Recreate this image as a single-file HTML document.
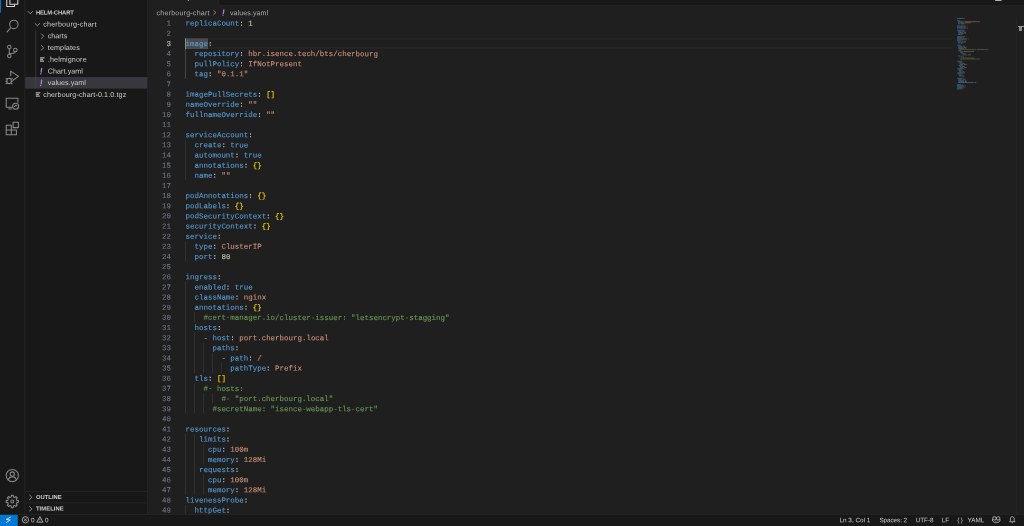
<!DOCTYPE html>
<html><head><meta charset="utf-8"><title>values.yaml - helm-chart</title>
<style>
*{box-sizing:border-box;margin:0;padding:0}
html,body{width:1024px;height:526px;overflow:hidden;background:#1f1f1f}
body{position:relative;font-family:"Liberation Sans",sans-serif;color:#ccc;text-rendering:geometricPrecision}
.bx{position:absolute}
.ic{position:absolute;overflow:visible}
.t,.m{position:absolute;left:0;top:0;transform-origin:0 0;white-space:pre;display:block}
.t{font-size:7.17px;line-height:11.733px;height:11.733px;color:#ccc}
.t.b{font-weight:bold;font-size:5.87px}
.t.s{font-size:6.4px}
.t.x{color:#a57fd0;font-style:italic;font-weight:normal;font-size:8.4px}
.m{font-family:"Liberation Mono",monospace;font-size:7.4667px;line-height:10.146px;height:10.146px;color:#ccc}
.m.n{color:#6e7681}
.m.n.c{color:#ccc}
.k{color:#569cd6}.p{color:#ccc}.s1{color:#ce9178}.nu{color:#b5cea8}.br{color:#ffd700}.co{color:#6a9955}
.m i{font-style:normal}
.fb{position:absolute;left:0;top:0;transform-origin:0 0}
.m{-webkit-text-stroke:0.1px}
#root{position:absolute;left:0;top:0;width:1024px;height:526px;overflow:hidden;will-change:transform}
</style></head><body>
<div id="root">
<div class="bx" style="left:219.00px;top:0.00px;width:805.00px;height:5.60px;background:#181818;"></div>
<svg class="ic" style="left:219px;top:5px" width="805" height="1" viewBox="219 5 805 1"><rect x="219.00" y="5.30" width="805.00" height="0.60" fill="#2b2b2b"/></svg>
<svg class="ic" style="left:218px;top:-1px" width="2" height="7" viewBox="218 -1 2 7"><rect x="218.60" y="-1.00" width="0.60" height="6.60" fill="#2b2b2b"/></svg>
<svg class="ic" style="left:187px;top:-1px" width="2" height="2" viewBox="187 -1 2 2"><rect x="187.80" y="-0.30" width="1.00" height="1.20" fill="#bdbdbd"/></svg>
<svg class="ic" style="left:995px;top:-1px" width="7" height="2" viewBox="995 -1 7 2"><rect x="995.20" y="-0.30" width="6.30" height="1.20" fill="#c8c8c8"/></svg>
<span id="b0" class="t" style="transform:translate(156.50px,8.20px) rotate(.03deg);letter-spacing:0.177px;color:#a9a9a9">cherbourg-chart</span>
<svg class="ic" style="left:210px;top:8px" width="10" height="10" fill="none" stroke="#a9a9a9" stroke-width="1.5" ><g transform="translate(0.800 0.750) scale(0.46875)"><path d="M5.5 3l5.5 5-5.5 5"/></g></svg>
<svg class="ic" style="left:220px;top:8px" width="8" height="10" fill="none" stroke="#a882d6" stroke-width="1" stroke-linecap="round"><g transform="translate(3.400 4.500) scale(1.00000)"><path d="M0.450 -2.700L-0.050 0.900" stroke-width="1.300"/><path d="M-0.400 2.550l-0.020 0.100" stroke-width="1.350"/></g></svg>
<span id="b1" class="t" style="transform:translate(230.00px,8.20px) rotate(.03deg);letter-spacing:0.038px;color:#a9a9a9">values.yaml</span>
<svg class="ic" style="left:185px;top:38px" width="768" height="2" viewBox="185 38 768 2"><rect x="185.20" y="38.44" width="767.00" height="1.07" fill="#2a2a2a"/></svg>
<svg class="ic" style="left:185px;top:47px" width="768" height="2" viewBox="185 47 768 2"><rect x="185.20" y="47.37" width="767.00" height="1.07" fill="#2a2a2a"/></svg>
<svg class="ic" style="left:185px;top:38px" width="23" height="12" viewBox="185 38 23 12"><rect x="185.30" y="38.29" width="22.70" height="10.75" fill="#4a4b4d"/></svg>
<svg class="ic" style="left:185px;top:48px" width="1" height="31" viewBox="185 48 1 31"><rect x="185.10" y="48.44" width="0.55" height="30.44" fill="#666666"/></svg>
<svg class="ic" style="left:185px;top:139px" width="1" height="42" viewBox="185 139 1 42"><rect x="185.10" y="139.75" width="0.55" height="40.58" fill="#3e3e3e"/></svg>
<svg class="ic" style="left:185px;top:241px" width="1" height="21" viewBox="185 241 1 21"><rect x="185.10" y="241.21" width="0.55" height="20.29" fill="#3e3e3e"/></svg>
<svg class="ic" style="left:185px;top:281px" width="1" height="133" viewBox="185 281 1 133"><rect x="185.10" y="281.80" width="0.55" height="131.90" fill="#3e3e3e"/></svg>
<svg class="ic" style="left:185px;top:433px" width="1" height="62" viewBox="185 433 1 62"><rect x="185.10" y="433.99" width="0.55" height="60.88" fill="#3e3e3e"/></svg>
<svg class="ic" style="left:185px;top:505px" width="1" height="21" viewBox="185 505 1 21"><rect x="185.10" y="505.01" width="0.55" height="20.29" fill="#3e3e3e"/></svg>
<svg class="ic" style="left:194px;top:312px" width="1" height="11" viewBox="194 312 1 11"><rect x="194.06" y="312.23" width="0.55" height="10.15" fill="#3e3e3e"/></svg>
<svg class="ic" style="left:194px;top:332px" width="1" height="42" viewBox="194 332 1 42"><rect x="194.06" y="332.53" width="0.55" height="40.58" fill="#3e3e3e"/></svg>
<svg class="ic" style="left:194px;top:383px" width="1" height="31" viewBox="194 383 1 31"><rect x="194.06" y="383.26" width="0.55" height="30.44" fill="#3e3e3e"/></svg>
<svg class="ic" style="left:194px;top:433px" width="1" height="62" viewBox="194 433 1 62"><rect x="194.06" y="433.99" width="0.55" height="60.88" fill="#3e3e3e"/></svg>
<svg class="ic" style="left:194px;top:515px" width="1" height="11" viewBox="194 515 1 11"><rect x="194.06" y="515.15" width="0.55" height="10.15" fill="#3e3e3e"/></svg>
<svg class="ic" style="left:203px;top:342px" width="1" height="32" viewBox="203 342 1 32"><rect x="203.02" y="342.67" width="0.55" height="30.44" fill="#3e3e3e"/></svg>
<svg class="ic" style="left:203px;top:393px" width="1" height="21" viewBox="203 393 1 21"><rect x="203.02" y="393.40" width="0.55" height="20.29" fill="#3e3e3e"/></svg>
<svg class="ic" style="left:203px;top:444px" width="1" height="21" viewBox="203 444 1 21"><rect x="203.02" y="444.13" width="0.55" height="20.29" fill="#3e3e3e"/></svg>
<svg class="ic" style="left:203px;top:474px" width="1" height="21" viewBox="203 474 1 21"><rect x="203.02" y="474.57" width="0.55" height="20.29" fill="#3e3e3e"/></svg>
<svg class="ic" style="left:211px;top:352px" width="2" height="22" viewBox="211 352 2 22"><rect x="211.98" y="352.82" width="0.55" height="20.29" fill="#3e3e3e"/></svg>
<svg class="ic" style="left:211px;top:393px" width="2" height="11" viewBox="211 393 2 11"><rect x="211.98" y="393.40" width="0.55" height="10.15" fill="#3e3e3e"/></svg>
<svg class="ic" style="left:220px;top:362px" width="2" height="12" viewBox="220 362 2 12"><rect x="220.94" y="362.96" width="0.55" height="10.15" fill="#3e3e3e"/></svg>
<span class="m n" style="transform:translate(166.42px,19.60px) rotate(.03deg);">1</span>
<span class="m" style="transform:translate(185.60px,19.60px) rotate(.03deg);"><i class="k">replicaCount</i><i class="p">:</i> <i class="nu">1</i></span>
<span class="m n" style="transform:translate(166.42px,29.75px) rotate(.03deg);">2</span>
<span class="m n c" style="transform:translate(166.42px,39.89px) rotate(.03deg);">3</span>
<span class="m" style="transform:translate(185.60px,39.89px) rotate(.03deg);"><i class="k">image</i><i class="p">:</i></span>
<span class="m n" style="transform:translate(166.42px,50.04px) rotate(.03deg);">4</span>
<span id="c4" class="m" style="transform:translate(185.60px,50.04px) rotate(.03deg);">  <i class="k">repository</i><i class="p">:</i> <i class="s1">hbr.isence.tech/bts/cherbourg</i></span>
<span class="m n" style="transform:translate(166.42px,60.18px) rotate(.03deg);">5</span>
<span class="m" style="transform:translate(185.60px,60.18px) rotate(.03deg);">  <i class="k">pullPolicy</i><i class="p">:</i> <i class="s1">IfNotPresent</i></span>
<span class="m n" style="transform:translate(166.42px,70.33px) rotate(.03deg);">6</span>
<span class="m" style="transform:translate(185.60px,70.33px) rotate(.03deg);">  <i class="k">tag</i><i class="p">:</i> <i class="s1">"0.1.1"</i></span>
<span class="m n" style="transform:translate(166.42px,80.48px) rotate(.03deg);">7</span>
<span class="m n" style="transform:translate(166.42px,90.62px) rotate(.03deg);">8</span>
<span class="m" style="transform:translate(185.60px,90.62px) rotate(.03deg);"><i class="k">imagePullSecrets</i><i class="p">:</i> <i class="br">[]</i></span>
<span class="m n" style="transform:translate(166.42px,100.77px) rotate(.03deg);">9</span>
<span class="m" style="transform:translate(185.60px,100.77px) rotate(.03deg);"><i class="k">nameOverride</i><i class="p">:</i> <i class="s1">""</i></span>
<span class="m n" style="transform:translate(161.94px,110.91px) rotate(.03deg);">10</span>
<span class="m" style="transform:translate(185.60px,110.91px) rotate(.03deg);"><i class="k">fullnameOverride</i><i class="p">:</i> <i class="s1">""</i></span>
<span class="m n" style="transform:translate(161.94px,121.06px) rotate(.03deg);">11</span>
<span class="m n" style="transform:translate(161.94px,131.21px) rotate(.03deg);">12</span>
<span class="m" style="transform:translate(185.60px,131.21px) rotate(.03deg);"><i class="k">serviceAccount</i><i class="p">:</i></span>
<span class="m n" style="transform:translate(161.94px,141.35px) rotate(.03deg);">13</span>
<span class="m" style="transform:translate(185.60px,141.35px) rotate(.03deg);">  <i class="k">create</i><i class="p">:</i> <i class="k">true</i></span>
<span class="m n" style="transform:translate(161.94px,151.50px) rotate(.03deg);">14</span>
<span class="m" style="transform:translate(185.60px,151.50px) rotate(.03deg);">  <i class="k">automount</i><i class="p">:</i> <i class="k">true</i></span>
<span class="m n" style="transform:translate(161.94px,161.64px) rotate(.03deg);">15</span>
<span class="m" style="transform:translate(185.60px,161.64px) rotate(.03deg);">  <i class="k">annotations</i><i class="p">:</i> <i class="br">{}</i></span>
<span class="m n" style="transform:translate(161.94px,171.79px) rotate(.03deg);">16</span>
<span class="m" style="transform:translate(185.60px,171.79px) rotate(.03deg);">  <i class="k">name</i><i class="p">:</i> <i class="s1">""</i></span>
<span class="m n" style="transform:translate(161.94px,181.94px) rotate(.03deg);">17</span>
<span class="m n" style="transform:translate(161.94px,192.08px) rotate(.03deg);">18</span>
<span class="m" style="transform:translate(185.60px,192.08px) rotate(.03deg);"><i class="k">podAnnotations</i><i class="p">:</i> <i class="br">{}</i></span>
<span class="m n" style="transform:translate(161.94px,202.23px) rotate(.03deg);">19</span>
<span class="m" style="transform:translate(185.60px,202.23px) rotate(.03deg);"><i class="k">podLabels</i><i class="p">:</i> <i class="br">{}</i></span>
<span class="m n" style="transform:translate(161.94px,212.37px) rotate(.03deg);">20</span>
<span class="m" style="transform:translate(185.60px,212.37px) rotate(.03deg);"><i class="k">podSecurityContext</i><i class="p">:</i> <i class="br">{}</i></span>
<span class="m n" style="transform:translate(161.94px,222.52px) rotate(.03deg);">21</span>
<span class="m" style="transform:translate(185.60px,222.52px) rotate(.03deg);"><i class="k">securityContext</i><i class="p">:</i> <i class="br">{}</i></span>
<span class="m n" style="transform:translate(161.94px,232.67px) rotate(.03deg);">22</span>
<span class="m" style="transform:translate(185.60px,232.67px) rotate(.03deg);"><i class="k">service</i><i class="p">:</i></span>
<span class="m n" style="transform:translate(161.94px,242.81px) rotate(.03deg);">23</span>
<span class="m" style="transform:translate(185.60px,242.81px) rotate(.03deg);">  <i class="k">type</i><i class="p">:</i> <i class="s1">ClusterIP</i></span>
<span class="m n" style="transform:translate(161.94px,252.96px) rotate(.03deg);">24</span>
<span class="m" style="transform:translate(185.60px,252.96px) rotate(.03deg);">  <i class="k">port</i><i class="p">:</i> <i class="nu">80</i></span>
<span class="m n" style="transform:translate(161.94px,263.10px) rotate(.03deg);">25</span>
<span class="m n" style="transform:translate(161.94px,273.25px) rotate(.03deg);">26</span>
<span class="m" style="transform:translate(185.60px,273.25px) rotate(.03deg);"><i class="k">ingress</i><i class="p">:</i></span>
<span class="m n" style="transform:translate(161.94px,283.40px) rotate(.03deg);">27</span>
<span class="m" style="transform:translate(185.60px,283.40px) rotate(.03deg);">  <i class="k">enabled</i><i class="p">:</i> <i class="k">true</i></span>
<span class="m n" style="transform:translate(161.94px,293.54px) rotate(.03deg);">28</span>
<span class="m" style="transform:translate(185.60px,293.54px) rotate(.03deg);">  <i class="k">className</i><i class="p">:</i> <i class="s1">nginx</i></span>
<span class="m n" style="transform:translate(161.94px,303.69px) rotate(.03deg);">29</span>
<span class="m" style="transform:translate(185.60px,303.69px) rotate(.03deg);">  <i class="k">annotations</i><i class="p">:</i> <i class="br">{}</i></span>
<span class="m n" style="transform:translate(161.94px,313.83px) rotate(.03deg);">30</span>
<span id="c30" class="m" style="transform:translate(185.60px,313.83px) rotate(.03deg);">    <i class="co">#cert-manager.io/cluster-issuer: "letsencrypt-stagging"</i></span>
<span class="m n" style="transform:translate(161.94px,323.98px) rotate(.03deg);">31</span>
<span class="m" style="transform:translate(185.60px,323.98px) rotate(.03deg);">  <i class="k">hosts</i><i class="p">:</i></span>
<span class="m n" style="transform:translate(161.94px,334.13px) rotate(.03deg);">32</span>
<span class="m" style="transform:translate(185.60px,334.13px) rotate(.03deg);">    <i class="p">-</i> <i class="k">host</i><i class="p">:</i> <i class="s1">port.cherbourg.local</i></span>
<span class="m n" style="transform:translate(161.94px,344.27px) rotate(.03deg);">33</span>
<span class="m" style="transform:translate(185.60px,344.27px) rotate(.03deg);">      <i class="k">paths</i><i class="p">:</i></span>
<span class="m n" style="transform:translate(161.94px,354.42px) rotate(.03deg);">34</span>
<span class="m" style="transform:translate(185.60px,354.42px) rotate(.03deg);">        <i class="p">-</i> <i class="k">path</i><i class="p">:</i> <i class="s1">/</i></span>
<span class="m n" style="transform:translate(161.94px,364.56px) rotate(.03deg);">35</span>
<span class="m" style="transform:translate(185.60px,364.56px) rotate(.03deg);">          <i class="k">pathType</i><i class="p">:</i> <i class="s1">Prefix</i></span>
<span class="m n" style="transform:translate(161.94px,374.71px) rotate(.03deg);">36</span>
<span class="m" style="transform:translate(185.60px,374.71px) rotate(.03deg);">  <i class="k">tls</i><i class="p">:</i> <i class="br">[]</i></span>
<span class="m n" style="transform:translate(161.94px,384.86px) rotate(.03deg);">37</span>
<span class="m" style="transform:translate(185.60px,384.86px) rotate(.03deg);">    <i class="co">#- hosts:</i></span>
<span class="m n" style="transform:translate(161.94px,395.00px) rotate(.03deg);">38</span>
<span class="m" style="transform:translate(185.60px,395.00px) rotate(.03deg);">        <i class="co">#- "port.cherbourg.local"</i></span>
<span class="m n" style="transform:translate(161.94px,405.15px) rotate(.03deg);">39</span>
<span class="m" style="transform:translate(185.60px,405.15px) rotate(.03deg);">      <i class="co">#secretName: "isence-webapp-tls-cert"</i></span>
<span class="m n" style="transform:translate(161.94px,415.29px) rotate(.03deg);">40</span>
<span class="m n" style="transform:translate(161.94px,425.44px) rotate(.03deg);">41</span>
<span class="m" style="transform:translate(185.60px,425.44px) rotate(.03deg);"><i class="k">resources</i><i class="p">:</i></span>
<span class="m n" style="transform:translate(161.94px,435.59px) rotate(.03deg);">42</span>
<span class="m" style="transform:translate(185.60px,435.59px) rotate(.03deg);">   <i class="k">limits</i><i class="p">:</i></span>
<span class="m n" style="transform:translate(161.94px,445.73px) rotate(.03deg);">43</span>
<span class="m" style="transform:translate(185.60px,445.73px) rotate(.03deg);">     <i class="k">cpu</i><i class="p">:</i> <i class="s1">100m</i></span>
<span class="m n" style="transform:translate(161.94px,455.88px) rotate(.03deg);">44</span>
<span class="m" style="transform:translate(185.60px,455.88px) rotate(.03deg);">     <i class="k">memory</i><i class="p">:</i> <i class="s1">128Mi</i></span>
<span class="m n" style="transform:translate(161.94px,466.02px) rotate(.03deg);">45</span>
<span class="m" style="transform:translate(185.60px,466.02px) rotate(.03deg);">   <i class="k">requests</i><i class="p">:</i></span>
<span class="m n" style="transform:translate(161.94px,476.17px) rotate(.03deg);">46</span>
<span class="m" style="transform:translate(185.60px,476.17px) rotate(.03deg);">     <i class="k">cpu</i><i class="p">:</i> <i class="s1">100m</i></span>
<span class="m n" style="transform:translate(161.94px,486.32px) rotate(.03deg);">47</span>
<span class="m" style="transform:translate(185.60px,486.32px) rotate(.03deg);">     <i class="k">memory</i><i class="p">:</i> <i class="s1">128Mi</i></span>
<span class="m n" style="transform:translate(161.94px,496.46px) rotate(.03deg);">48</span>
<span class="m" style="transform:translate(185.60px,496.46px) rotate(.03deg);"><i class="k">livenessProbe</i><i class="p">:</i></span>
<span class="m n" style="transform:translate(161.94px,506.61px) rotate(.03deg);">49</span>
<span class="m" style="transform:translate(185.60px,506.61px) rotate(.03deg);">  <i class="k">httpGet</i><i class="p">:</i></span>
<span class="m n" style="transform:translate(161.94px,516.75px) rotate(.03deg);">50</span>
<span class="m" style="transform:translate(185.60px,516.75px) rotate(.03deg);">    <i class="k">path</i><i class="p">:</i> <i class="s1">/</i></span>
<svg class="ic" style="left:185px;top:38px" width="1" height="12" viewBox="185 38 1 12"><rect x="185.00" y="38.29" width="1.00" height="10.75" fill="#8c8c8c"/></svg>
<svg class="ic" style="left:956.8px;top:17.75px" width="60" height="80" viewBox="0 0 60 80"><rect x="0.00" y="0.00" width="6.40" height="1.01" fill="#569cd6" opacity="0.42"/><rect x="6.40" y="0.00" width="0.53" height="1.01" fill="#cccccc" opacity="0.19"/><rect x="7.47" y="0.00" width="0.53" height="1.01" fill="#b5cea8" opacity="0.42"/><rect x="0.00" y="2.13" width="2.67" height="1.01" fill="#569cd6" opacity="0.42"/><rect x="2.67" y="2.13" width="0.53" height="1.01" fill="#cccccc" opacity="0.19"/><rect x="1.07" y="3.20" width="5.33" height="1.01" fill="#569cd6" opacity="0.42"/><rect x="6.40" y="3.20" width="0.53" height="1.01" fill="#cccccc" opacity="0.19"/><rect x="7.47" y="3.20" width="15.47" height="1.01" fill="#ce9178" opacity="0.42"/><rect x="1.07" y="4.27" width="5.33" height="1.01" fill="#569cd6" opacity="0.42"/><rect x="6.40" y="4.27" width="0.53" height="1.01" fill="#cccccc" opacity="0.19"/><rect x="7.47" y="4.27" width="6.40" height="1.01" fill="#ce9178" opacity="0.42"/><rect x="1.07" y="5.33" width="1.60" height="1.01" fill="#569cd6" opacity="0.42"/><rect x="2.67" y="5.33" width="0.53" height="1.01" fill="#cccccc" opacity="0.19"/><rect x="3.73" y="5.33" width="3.73" height="1.01" fill="#ce9178" opacity="0.42"/><rect x="0.00" y="7.47" width="8.53" height="1.01" fill="#569cd6" opacity="0.42"/><rect x="8.53" y="7.47" width="0.53" height="1.01" fill="#cccccc" opacity="0.19"/><rect x="9.60" y="7.47" width="1.07" height="1.01" fill="#ffd700" opacity="0.19"/><rect x="0.00" y="8.53" width="6.40" height="1.01" fill="#569cd6" opacity="0.42"/><rect x="6.40" y="8.53" width="0.53" height="1.01" fill="#cccccc" opacity="0.19"/><rect x="7.47" y="8.53" width="1.07" height="1.01" fill="#ce9178" opacity="0.42"/><rect x="0.00" y="9.60" width="8.53" height="1.01" fill="#569cd6" opacity="0.42"/><rect x="8.53" y="9.60" width="0.53" height="1.01" fill="#cccccc" opacity="0.19"/><rect x="9.60" y="9.60" width="1.07" height="1.01" fill="#ce9178" opacity="0.42"/><rect x="0.00" y="11.73" width="7.47" height="1.01" fill="#569cd6" opacity="0.42"/><rect x="7.47" y="11.73" width="0.53" height="1.01" fill="#cccccc" opacity="0.19"/><rect x="1.07" y="12.80" width="3.20" height="1.01" fill="#569cd6" opacity="0.42"/><rect x="4.27" y="12.80" width="0.53" height="1.01" fill="#cccccc" opacity="0.19"/><rect x="5.33" y="12.80" width="2.13" height="1.01" fill="#569cd6" opacity="0.42"/><rect x="1.07" y="13.87" width="4.80" height="1.01" fill="#569cd6" opacity="0.42"/><rect x="5.87" y="13.87" width="0.53" height="1.01" fill="#cccccc" opacity="0.19"/><rect x="6.93" y="13.87" width="2.13" height="1.01" fill="#569cd6" opacity="0.42"/><rect x="1.07" y="14.93" width="5.87" height="1.01" fill="#569cd6" opacity="0.42"/><rect x="6.93" y="14.93" width="0.53" height="1.01" fill="#cccccc" opacity="0.19"/><rect x="8.00" y="14.93" width="1.07" height="1.01" fill="#ffd700" opacity="0.19"/><rect x="1.07" y="16.00" width="2.13" height="1.01" fill="#569cd6" opacity="0.42"/><rect x="3.20" y="16.00" width="0.53" height="1.01" fill="#cccccc" opacity="0.19"/><rect x="4.27" y="16.00" width="1.07" height="1.01" fill="#ce9178" opacity="0.42"/><rect x="0.00" y="18.13" width="7.47" height="1.01" fill="#569cd6" opacity="0.42"/><rect x="7.47" y="18.13" width="0.53" height="1.01" fill="#cccccc" opacity="0.19"/><rect x="8.53" y="18.13" width="1.07" height="1.01" fill="#ffd700" opacity="0.19"/><rect x="0.00" y="19.20" width="4.80" height="1.01" fill="#569cd6" opacity="0.42"/><rect x="4.80" y="19.20" width="0.53" height="1.01" fill="#cccccc" opacity="0.19"/><rect x="5.87" y="19.20" width="1.07" height="1.01" fill="#ffd700" opacity="0.19"/><rect x="0.00" y="20.27" width="9.60" height="1.01" fill="#569cd6" opacity="0.42"/><rect x="9.60" y="20.27" width="0.53" height="1.01" fill="#cccccc" opacity="0.19"/><rect x="10.67" y="20.27" width="1.07" height="1.01" fill="#ffd700" opacity="0.19"/><rect x="0.00" y="21.33" width="8.00" height="1.01" fill="#569cd6" opacity="0.42"/><rect x="8.00" y="21.33" width="0.53" height="1.01" fill="#cccccc" opacity="0.19"/><rect x="9.07" y="21.33" width="1.07" height="1.01" fill="#ffd700" opacity="0.19"/><rect x="0.00" y="22.40" width="3.73" height="1.01" fill="#569cd6" opacity="0.42"/><rect x="3.73" y="22.40" width="0.53" height="1.01" fill="#cccccc" opacity="0.19"/><rect x="1.07" y="23.47" width="2.13" height="1.01" fill="#569cd6" opacity="0.42"/><rect x="3.20" y="23.47" width="0.53" height="1.01" fill="#cccccc" opacity="0.19"/><rect x="4.27" y="23.47" width="4.80" height="1.01" fill="#ce9178" opacity="0.42"/><rect x="1.07" y="24.53" width="2.13" height="1.01" fill="#569cd6" opacity="0.42"/><rect x="3.20" y="24.53" width="0.53" height="1.01" fill="#cccccc" opacity="0.19"/><rect x="4.27" y="24.53" width="1.07" height="1.01" fill="#b5cea8" opacity="0.42"/><rect x="0.00" y="26.67" width="3.73" height="1.01" fill="#569cd6" opacity="0.42"/><rect x="3.73" y="26.67" width="0.53" height="1.01" fill="#cccccc" opacity="0.19"/><rect x="1.07" y="27.73" width="3.73" height="1.01" fill="#569cd6" opacity="0.42"/><rect x="4.80" y="27.73" width="0.53" height="1.01" fill="#cccccc" opacity="0.19"/><rect x="5.87" y="27.73" width="2.13" height="1.01" fill="#569cd6" opacity="0.42"/><rect x="1.07" y="28.80" width="4.80" height="1.01" fill="#569cd6" opacity="0.42"/><rect x="5.87" y="28.80" width="0.53" height="1.01" fill="#cccccc" opacity="0.19"/><rect x="6.93" y="28.80" width="2.67" height="1.01" fill="#ce9178" opacity="0.42"/><rect x="1.07" y="29.87" width="5.87" height="1.01" fill="#569cd6" opacity="0.42"/><rect x="6.93" y="29.87" width="0.53" height="1.01" fill="#cccccc" opacity="0.19"/><rect x="8.00" y="29.87" width="1.07" height="1.01" fill="#ffd700" opacity="0.19"/><rect x="2.13" y="30.93" width="17.07" height="1.01" fill="#6a9955" opacity="0.42"/><rect x="19.73" y="30.93" width="11.73" height="1.01" fill="#6a9955" opacity="0.42"/><rect x="1.07" y="32.00" width="2.67" height="1.01" fill="#569cd6" opacity="0.42"/><rect x="3.73" y="32.00" width="0.53" height="1.01" fill="#cccccc" opacity="0.19"/><rect x="2.13" y="33.07" width="0.53" height="1.01" fill="#cccccc" opacity="0.19"/><rect x="3.20" y="33.07" width="2.13" height="1.01" fill="#569cd6" opacity="0.42"/><rect x="5.33" y="33.07" width="0.53" height="1.01" fill="#cccccc" opacity="0.19"/><rect x="6.40" y="33.07" width="10.67" height="1.01" fill="#ce9178" opacity="0.42"/><rect x="3.20" y="34.13" width="2.67" height="1.01" fill="#569cd6" opacity="0.42"/><rect x="5.87" y="34.13" width="0.53" height="1.01" fill="#cccccc" opacity="0.19"/><rect x="4.27" y="35.20" width="0.53" height="1.01" fill="#cccccc" opacity="0.19"/><rect x="5.33" y="35.20" width="2.13" height="1.01" fill="#569cd6" opacity="0.42"/><rect x="7.47" y="35.20" width="0.53" height="1.01" fill="#cccccc" opacity="0.19"/><rect x="8.53" y="35.20" width="0.53" height="1.01" fill="#ce9178" opacity="0.42"/><rect x="5.33" y="36.27" width="4.27" height="1.01" fill="#569cd6" opacity="0.42"/><rect x="9.60" y="36.27" width="0.53" height="1.01" fill="#cccccc" opacity="0.19"/><rect x="10.67" y="36.27" width="3.20" height="1.01" fill="#ce9178" opacity="0.42"/><rect x="1.07" y="37.33" width="1.60" height="1.01" fill="#569cd6" opacity="0.42"/><rect x="2.67" y="37.33" width="0.53" height="1.01" fill="#cccccc" opacity="0.19"/><rect x="3.73" y="37.33" width="1.07" height="1.01" fill="#ffd700" opacity="0.19"/><rect x="2.13" y="38.40" width="1.07" height="1.01" fill="#6a9955" opacity="0.42"/><rect x="3.73" y="38.40" width="3.20" height="1.01" fill="#6a9955" opacity="0.42"/><rect x="4.27" y="39.47" width="1.07" height="1.01" fill="#6a9955" opacity="0.42"/><rect x="5.87" y="39.47" width="11.73" height="1.01" fill="#6a9955" opacity="0.42"/><rect x="3.20" y="40.53" width="6.40" height="1.01" fill="#6a9955" opacity="0.42"/><rect x="10.13" y="40.53" width="12.80" height="1.01" fill="#6a9955" opacity="0.42"/><rect x="0.00" y="42.67" width="4.80" height="1.01" fill="#569cd6" opacity="0.42"/><rect x="4.80" y="42.67" width="0.53" height="1.01" fill="#cccccc" opacity="0.19"/><rect x="1.60" y="43.73" width="3.20" height="1.01" fill="#569cd6" opacity="0.42"/><rect x="4.80" y="43.73" width="0.53" height="1.01" fill="#cccccc" opacity="0.19"/><rect x="2.67" y="44.80" width="1.60" height="1.01" fill="#569cd6" opacity="0.42"/><rect x="4.27" y="44.80" width="0.53" height="1.01" fill="#cccccc" opacity="0.19"/><rect x="5.33" y="44.80" width="2.13" height="1.01" fill="#ce9178" opacity="0.42"/><rect x="2.67" y="45.87" width="3.20" height="1.01" fill="#569cd6" opacity="0.42"/><rect x="5.87" y="45.87" width="0.53" height="1.01" fill="#cccccc" opacity="0.19"/><rect x="6.93" y="45.87" width="2.67" height="1.01" fill="#ce9178" opacity="0.42"/><rect x="1.60" y="46.93" width="4.27" height="1.01" fill="#569cd6" opacity="0.42"/><rect x="5.87" y="46.93" width="0.53" height="1.01" fill="#cccccc" opacity="0.19"/><rect x="2.67" y="48.00" width="1.60" height="1.01" fill="#569cd6" opacity="0.42"/><rect x="4.27" y="48.00" width="0.53" height="1.01" fill="#cccccc" opacity="0.19"/><rect x="5.33" y="48.00" width="2.13" height="1.01" fill="#ce9178" opacity="0.42"/><rect x="2.67" y="49.07" width="3.20" height="1.01" fill="#569cd6" opacity="0.42"/><rect x="5.87" y="49.07" width="0.53" height="1.01" fill="#cccccc" opacity="0.19"/><rect x="6.93" y="49.07" width="2.67" height="1.01" fill="#ce9178" opacity="0.42"/><rect x="0.00" y="50.13" width="6.93" height="1.01" fill="#569cd6" opacity="0.42"/><rect x="6.93" y="50.13" width="0.53" height="1.01" fill="#cccccc" opacity="0.19"/><rect x="1.07" y="51.20" width="3.73" height="1.01" fill="#569cd6" opacity="0.42"/><rect x="4.80" y="51.20" width="0.53" height="1.01" fill="#cccccc" opacity="0.19"/><rect x="2.13" y="52.27" width="2.13" height="1.01" fill="#569cd6" opacity="0.42"/><rect x="4.27" y="52.27" width="0.53" height="1.01" fill="#cccccc" opacity="0.19"/><rect x="5.33" y="52.27" width="0.53" height="1.01" fill="#ce9178" opacity="0.42"/><rect x="2.13" y="53.34" width="2.13" height="1.01" fill="#569cd6" opacity="0.42"/><rect x="4.27" y="53.34" width="0.53" height="1.01" fill="#cccccc" opacity="0.19"/><rect x="5.33" y="53.34" width="2.13" height="1.01" fill="#ce9178" opacity="0.42"/><rect x="0.00" y="54.40" width="7.47" height="1.01" fill="#569cd6" opacity="0.42"/><rect x="7.47" y="54.40" width="0.53" height="1.01" fill="#cccccc" opacity="0.19"/><rect x="1.07" y="55.47" width="3.73" height="1.01" fill="#569cd6" opacity="0.42"/><rect x="4.80" y="55.47" width="0.53" height="1.01" fill="#cccccc" opacity="0.19"/><rect x="2.13" y="56.54" width="2.13" height="1.01" fill="#569cd6" opacity="0.42"/><rect x="4.27" y="56.54" width="0.53" height="1.01" fill="#cccccc" opacity="0.19"/><rect x="5.33" y="56.54" width="0.53" height="1.01" fill="#ce9178" opacity="0.42"/><rect x="2.13" y="57.60" width="2.13" height="1.01" fill="#569cd6" opacity="0.42"/><rect x="4.27" y="57.60" width="0.53" height="1.01" fill="#cccccc" opacity="0.19"/><rect x="5.33" y="57.60" width="2.13" height="1.01" fill="#ce9178" opacity="0.42"/><rect x="0.00" y="59.74" width="5.87" height="1.01" fill="#569cd6" opacity="0.42"/><rect x="5.87" y="59.74" width="0.53" height="1.01" fill="#cccccc" opacity="0.19"/><rect x="1.07" y="60.80" width="3.73" height="1.01" fill="#569cd6" opacity="0.42"/><rect x="4.80" y="60.80" width="0.53" height="1.01" fill="#cccccc" opacity="0.19"/><rect x="5.87" y="60.80" width="2.67" height="1.01" fill="#569cd6" opacity="0.42"/><rect x="1.07" y="61.87" width="5.87" height="1.01" fill="#569cd6" opacity="0.42"/><rect x="6.93" y="61.87" width="0.53" height="1.01" fill="#cccccc" opacity="0.19"/><rect x="8.00" y="61.87" width="0.53" height="1.01" fill="#b5cea8" opacity="0.42"/><rect x="1.07" y="62.94" width="5.87" height="1.01" fill="#569cd6" opacity="0.42"/><rect x="6.93" y="62.94" width="0.53" height="1.01" fill="#cccccc" opacity="0.19"/><rect x="8.00" y="62.94" width="1.60" height="1.01" fill="#b5cea8" opacity="0.42"/><rect x="1.07" y="64.00" width="16.00" height="1.01" fill="#569cd6" opacity="0.42"/><rect x="17.07" y="64.00" width="0.53" height="1.01" fill="#cccccc" opacity="0.19"/><rect x="18.13" y="64.00" width="1.07" height="1.01" fill="#b5cea8" opacity="0.42"/><rect x="0.00" y="66.14" width="3.73" height="1.01" fill="#569cd6" opacity="0.42"/><rect x="3.73" y="66.14" width="0.53" height="1.01" fill="#cccccc" opacity="0.19"/><rect x="4.80" y="66.14" width="1.07" height="1.01" fill="#ffd700" opacity="0.19"/><rect x="0.00" y="67.20" width="6.40" height="1.01" fill="#569cd6" opacity="0.42"/><rect x="6.40" y="67.20" width="0.53" height="1.01" fill="#cccccc" opacity="0.19"/><rect x="7.47" y="67.20" width="1.07" height="1.01" fill="#ffd700" opacity="0.19"/><rect x="0.00" y="68.27" width="6.40" height="1.01" fill="#569cd6" opacity="0.42"/><rect x="6.40" y="68.27" width="0.53" height="1.01" fill="#cccccc" opacity="0.19"/><rect x="7.47" y="68.27" width="1.07" height="1.01" fill="#ffd700" opacity="0.19"/><rect x="0.00" y="69.34" width="5.87" height="1.01" fill="#569cd6" opacity="0.42"/><rect x="5.87" y="69.34" width="0.53" height="1.01" fill="#cccccc" opacity="0.19"/><rect x="6.93" y="69.34" width="1.07" height="1.01" fill="#ffd700" opacity="0.19"/><rect x="0.00" y="70.40" width="4.27" height="1.01" fill="#569cd6" opacity="0.42"/><rect x="4.27" y="70.40" width="0.53" height="1.01" fill="#cccccc" opacity="0.19"/><rect x="5.33" y="70.40" width="1.07" height="1.01" fill="#ffd700" opacity="0.19"/></svg>
<svg class="ic" style="left:1016px;top:17px" width="2" height="498" viewBox="1016 17 2 498"><rect x="1016.50" y="17.50" width="0.60" height="496.80" fill="#2b2b2b"/></svg>
<div class="bx" style="left:1017.60px;top:25.80px;width:6.40px;height:1.30px;background:#9a9a9a;"></div>
<div class="bx" style="left:1019.20px;top:27.00px;width:3.20px;height:4.00px;background:#8a8a8a;"></div>
<div class="bx" style="left:25.10px;top:0.00px;width:122.60px;height:514.40px;background:#181818;"></div>
<svg class="ic" style="left:147px;top:0px" width="1" height="515" viewBox="147 0 1 515"><rect x="147.20" y="0.00" width="0.60" height="514.40" fill="#2b2b2b"/></svg>
<svg class="ic" style="left:25px;top:77px" width="123" height="12" viewBox="25 77 123 12"><rect x="25.10" y="77.00" width="122.20" height="11.60" fill="#37373d"/></svg>
<svg class="ic" style="left:35px;top:30px" width="2" height="59" viewBox="35 30 2 59"><rect x="35.60" y="30.30" width="0.60" height="58.50" fill="#484848"/></svg>
<svg class="ic" style="left:26px;top:8px" width="10" height="10" fill="none" stroke="#c5c5c5" stroke-width="1.25" ><g transform="translate(0.030 0.030) scale(0.53312)"><path d="M3.2 5.800l4.800 4.800 4.800-4.800"/></g></svg>
<span id="s0" class="t b" style="transform:translate(35.90px,8.40px) rotate(.03deg);letter-spacing:-0.122px;">HELM-CHART</span>
<svg class="ic" style="left:33px;top:20px" width="10" height="10" fill="none" stroke="#c5c5c5" stroke-width="1.25" ><g transform="translate(0.130 0.130) scale(0.53312)"><path d="M3.2 5.800l4.800 4.800 4.800-4.800"/></g></svg>
<span id="s1" class="t" style="transform:translate(43.20px,19.60px) rotate(.03deg);letter-spacing:0.191px;">cherbourg-chart</span>
<svg class="ic" style="left:38px;top:31px" width="10" height="11" fill="none" stroke="#c5c5c5" stroke-width="1.25" ><g transform="translate(0.030 0.830) scale(0.53312)"><path d="M5.800 3.200l4.800 4.800-4.800 4.800"/></g></svg>
<span id="s2" class="t" style="transform:translate(47.80px,31.30px) rotate(.03deg);">charts</span>
<svg class="ic" style="left:38px;top:43px" width="10" height="11" fill="none" stroke="#c5c5c5" stroke-width="1.25" ><g transform="translate(0.030 0.530) scale(0.53312)"><path d="M5.800 3.200l4.800 4.800-4.800 4.800"/></g></svg>
<span id="s3" class="t" style="transform:translate(47.80px,42.90px) rotate(.03deg);letter-spacing:0.114px;">templates</span>
<svg class="ic" style="left:40px;top:56px" width="6" height="8" fill="none" stroke="none" stroke-width="0" ><g transform="translate(0.000 3.600) scale(1.00000)"><g fill="#a6a6a6"><rect x="0" y="-2.400" width="4.500" height="1.300"/><rect x="0" y="-0.750" width="3" height="1.300"/><rect x="0" y="0.900" width="4" height="1.300"/></g></g></svg>
<span id="s4" class="t" style="transform:translate(47.80px,54.70px) rotate(.03deg);letter-spacing:0.142px;">.helmignore</span>
<svg class="ic" style="left:38px;top:67px" width="8" height="10" fill="none" stroke="#a882d6" stroke-width="1" stroke-linecap="round"><g transform="translate(3.200 4.200) scale(1.00000)"><path d="M0.450 -2.700L-0.050 0.900" stroke-width="1.300"/><path d="M-0.400 2.550l-0.020 0.100" stroke-width="1.350"/></g></svg>
<span id="s5" class="t" style="transform:translate(47.80px,66.40px) rotate(.03deg);letter-spacing:0.062px;">Chart.yaml</span>
<svg class="ic" style="left:38px;top:78px" width="8" height="10" fill="none" stroke="#a882d6" stroke-width="1" stroke-linecap="round"><g transform="translate(3.200 4.900) scale(1.00000)"><path d="M0.450 -2.700L-0.050 0.900" stroke-width="1.300"/><path d="M-0.400 2.550l-0.020 0.100" stroke-width="1.350"/></g></svg>
<span id="s6" class="t" style="transform:translate(47.80px,78.10px) rotate(.03deg);letter-spacing:0.029px;">values.yaml</span>
<svg class="ic" style="left:35px;top:91px" width="7" height="8" fill="none" stroke="none" stroke-width="0" ><g transform="translate(0.800 3.600) scale(1.00000)"><g fill="#a6a6a6"><rect x="0" y="-2.400" width="4.500" height="1.300"/><rect x="0" y="-0.750" width="3" height="1.300"/><rect x="0" y="0.900" width="4" height="1.300"/></g></g></svg>
<span id="s7" class="t" style="transform:translate(43.20px,89.90px) rotate(.03deg);letter-spacing:0.112px;">cherbourg-chart-0.1.0.tgz</span>
<svg class="ic" style="left:25px;top:491px" width="123" height="1" viewBox="25 491 123 1"><rect x="25.10" y="491.20" width="122.30" height="0.60" fill="#2b2b2b"/></svg>
<svg class="ic" style="left:26px;top:493px" width="10" height="10" fill="none" stroke="#c5c5c5" stroke-width="1.25" ><g transform="translate(0.230 0.030) scale(0.53312)"><path d="M5.800 3.200l4.800 4.800-4.800 4.800"/></g></svg>
<span id="s8" class="t b" style="transform:translate(35.90px,493.00px) rotate(.03deg);letter-spacing:0.028px;">OUTLINE</span>
<svg class="ic" style="left:25px;top:502px" width="123" height="2" viewBox="25 502 123 2"><rect x="25.10" y="502.60" width="122.30" height="0.60" fill="#2b2b2b"/></svg>
<svg class="ic" style="left:26px;top:504px" width="10" height="11" fill="none" stroke="#c5c5c5" stroke-width="1.25" ><g transform="translate(0.230 0.630) scale(0.53312)"><path d="M5.800 3.200l4.800 4.800-4.800 4.800"/></g></svg>
<span id="s9" class="t b" style="transform:translate(35.90px,504.60px) rotate(.03deg);letter-spacing:0.061px;">TIMELINE</span>
<div class="bx" style="left:0.00px;top:0.00px;width:25.10px;height:514.30px;background:#181818;"></div>
<svg class="ic" style="left:24px;top:0px" width="2" height="515" viewBox="24 0 2 515"><rect x="24.55" y="0.00" width="0.60" height="514.30" fill="#2b2b2b"/></svg>
<svg class="ic" style="left:0px;top:-13px" width="2" height="26" viewBox="0 -13 2 26"><rect x="0.00" y="-13.00" width="1.07" height="25.70" fill="#0a70c4"/></svg>
<svg class="ic" style="left:0;top:0" width="25" height="526" viewBox="0 0 25 526" fill="none" stroke-linejoin="round">
<g stroke="#d4d4d4" stroke-width="1.050"><path d="M9.900 -2V4.250H17.800V-2"/><path d="M6.750 -2V6.450H14.500V4.250"/></g>
<g stroke="#8a8a8a" stroke-width="1.050">
<circle cx="13.9" cy="24.4" r="4.200"/><path d="M10.900 27.600L6.700 32.300"/>
<circle cx="9.3" cy="46.9" r="1.75"/><circle cx="9.3" cy="56" r="1.75"/><circle cx="15.3" cy="50" r="1.75"/><path d="M9.300 48.700V54.200M15.300 51.800C15.300 54 10.500 53.200 9.500 54.200"/>
<path d="M10.700 76V71.100L18.500 76.400L12.600 80.500"/><ellipse cx="9.1" cy="80.9" rx="2.2" ry="2.7"/><path d="M6.900 79.300l-1.300-0.900M11.300 79.300l1.300-0.900M6.800 81.300h-1.500M11.400 81.300h1.500M7 83l-1.200 1M11.200 83l1.200 1M7.300 78.400h3.600"/>
<path d="M12.200 107.200H6.200V98.200H17.900V102.600"/><path d="M8.300 108.900H11.800"/><circle cx="15.6" cy="106.3" r="3"/><path d="M14.300 107l1.300-1.700 1.400 0.700"/>
<path d="M6.200 125.300h5.100v4.700h5.100v4.700h-10.200zM6.200 130h5.100M11.300 130v4.700"/><rect x="13.1" y="122.300" width="5.300" height="5.300"/>
<circle cx="12.3" cy="475.5" r="6.1"/><circle cx="12.3" cy="474" r="2.15"/><path d="M8.100 479.800c0.700-2.100 2.200-3 4.200-3s3.500 0.900 4.200 3"/>
<path d="M11.38 495.37L13.22 495.37L13.41 497.04L14.67 497.56L15.98 496.51L17.29 497.82L16.24 499.13L16.76 500.39L18.43 500.58L18.43 502.42L16.76 502.61L16.24 503.87L17.29 505.18L15.98 506.49L14.67 505.44L13.41 505.96L13.22 507.63L11.38 507.63L11.19 505.96L9.93 505.44L8.62 506.49L7.31 505.18L8.36 503.87L7.84 502.61L6.17 502.42L6.17 500.58L7.84 500.39L8.36 499.13L7.31 497.82L8.62 496.51L9.93 497.56L11.19 497.04z"/><circle cx="12.3" cy="501.5" r="1.5"/>
</g></svg>
<div class="bx" style="left:0.00px;top:514.40px;width:1024.00px;height:11.70px;background:#181818;"></div>
<svg class="ic" style="left:0px;top:514px" width="1024" height="1" viewBox="0 514 1024 1"><rect x="0.00" y="514.30" width="1024.00" height="0.60" fill="#2b2b2b"/></svg>
<svg class="ic" style="left:0px;top:514px" width="18" height="13" viewBox="0 514 18 13"><rect x="0.00" y="514.90" width="17.80" height="11.70" fill="#0078d4"/></svg>
<svg class="ic" style="left:0;top:514.4px" width="1024" height="12" viewBox="0 514.4 1024 12" fill="none" stroke="#ccc" stroke-width="0.75" stroke-linejoin="round">
<path d="M10.900 517.300L6.300 519.800L10.300 520.400L6.100 523" stroke="#fff" stroke-width="0.9" opacity="0.85"/>
<circle cx="25.4" cy="520.2" r="3.15"/><path d="M24.100 518.900l2.600 2.600M26.700 518.900l-2.600 2.600"/>
<path d="M39.900 516.900l3.100 5.700h-6.200z"/><path d="M39.900 519v1.900M39.900 521.400v0.500"/>
<rect x="992.700" y="517.200" width="3.300" height="3.100" rx="1.100"/><rect x="996.500" y="517.200" width="3.300" height="3.100" rx="1.100"/><path d="M992.500 519.600v1.800c1 1.100 2.300 1.700 3.750 1.700s2.750-0.600 3.750-1.700v-1.800"/><path d="M995.300 521.100v0.800M997.200 521.100v0.800"/>
<path d="M1009.600 522.100h5.400l-0.800-1.100v-1.800c0-1.300-0.800-2.100-1.900-2.100s-1.900 0.800-1.900 2.100v1.800z"/><path d="M1011.700 523.200h1.200"/>
</svg>
<span id="t0" class="t s" style="transform:translate(31.00px,515.30px) rotate(.03deg);">0</span>
<span id="t1" class="t s" style="transform:translate(45.00px,515.30px) rotate(.03deg);">0</span>
<span id="t2" class="t s" style="transform:translate(839.50px,515.30px) rotate(.03deg);letter-spacing:-0.002px;">Ln 3, Col 1</span>
<span id="t3" class="t s" style="transform:translate(879.40px,515.30px) rotate(.03deg);letter-spacing:-0.096px;">Spaces: 2</span>
<span id="t4" class="t s" style="transform:translate(915.80px,515.30px) rotate(.03deg);letter-spacing:-0.100px;">UTF-8</span>
<span id="t5" class="t s" style="transform:translate(941.70px,515.30px) rotate(.03deg);letter-spacing:-0.100px;">LF</span>
<span id="t6" class="t s" style="transform:translate(957.30px,515.30px) rotate(.03deg);letter-spacing:1.300px;">{}</span>
<span id="t7" class="t s" style="transform:translate(967.40px,515.30px) rotate(.03deg);">YAML</span>
</div>
</body></html>
